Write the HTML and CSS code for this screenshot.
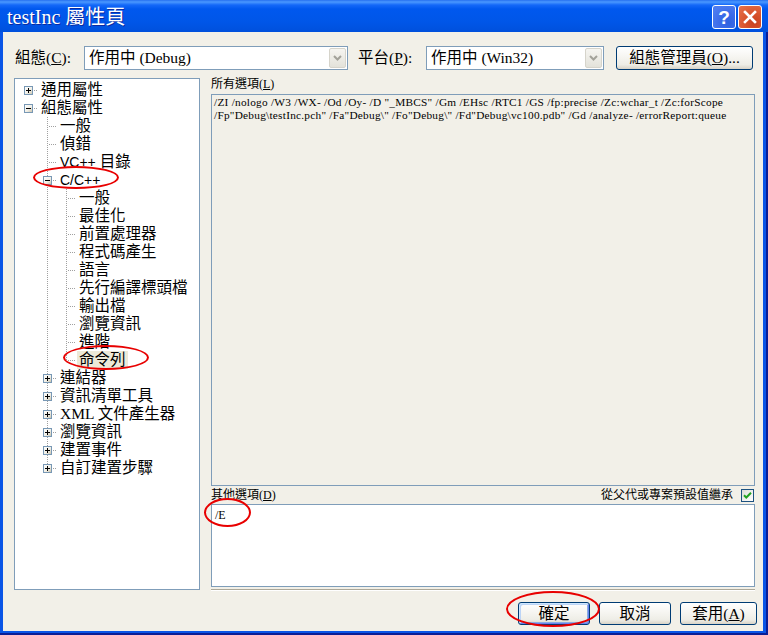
FILE: index.html
```html
<!DOCTYPE html>
<html lang="zh-Hant">
<head>
<meta charset="utf-8">
<title>testInc 屬性頁</title>
<link rel="stylesheet" href="styles.css">
</head>
<body>
<svg class="defs" width="0" height="0" aria-hidden="true">
  <defs>
    <linearGradient id="bxg" x1="0" y1="0" x2="1" y2="1">
      <stop offset="0" stop-color="#FFFFFF"/>
      <stop offset="0.55" stop-color="#F2F0E8"/>
      <stop offset="1" stop-color="#C5BEA6"/>
    </linearGradient>
    <symbol id="bp" viewBox="0 0 9 9">
      <rect x="0.5" y="0.5" width="8" height="8" fill="url(#bxg)" stroke="#7898B5"/>
      <path d="M2 4.5h5M4.5 2v5" stroke="#000" stroke-width="1"/>
    </symbol>
    <symbol id="bm" viewBox="0 0 9 9">
      <rect x="0.5" y="0.5" width="8" height="8" fill="url(#bxg)" stroke="#7898B5"/>
      <path d="M2 4.5h5" stroke="#000" stroke-width="1"/>
    </symbol>
    <symbol id="chev" viewBox="0 0 9 6">
      <path d="M1 1l3.5 3.5L8 1" fill="none" stroke="#A3A29A" stroke-width="2"/>
    </symbol>
  </defs>
</svg>
<div class="window">
  <div class="titlebar">
    <span class="title">testInc 屬性頁</span>
    <div class="tbtns">
      <span class="tb help">?</span>
      <span class="tb close"><svg width="14" height="14" viewBox="0 0 14 14"><path d="M2 2L12 12M12 2L2 12" stroke="#fff" stroke-width="2.6" stroke-linecap="square"/></svg></span>
    </div>
  </div>
  <div class="client">
    <div class="toprow">
      <span class="lbl l1">組態(<u>C</u>):</span>
      <div class="combo c1"><span class="ctext">作用中 (Debug)</span><span class="dd"><svg width="9" height="6"><use href="#chev"/></svg></span></div>
      <span class="lbl l2">平台(<u>P</u>):</span>
      <div class="combo c2"><span class="ctext">作用中 (Win32)</span><span class="dd"><svg width="9" height="6"><use href="#chev"/></svg></span></div>
      <button class="btn cfg">組態管理員(<u>O</u>)...</button>
    </div>
    <div class="main">
      <div class="tree">
        <div class="tr"><i class="c h"><svg class="bx"><use href="#bp"/></svg></i><span class="lb">通用屬性</span></div>
        <div class="tr"><i class="c h"><svg class="bx"><use href="#bm"/></svg></i><span class="lb">組態屬性</span></div>
        <div class="tr"><i class="c"></i><i class="c t"></i><span class="lb">一般</span></div>
        <div class="tr"><i class="c"></i><i class="c t"></i><span class="lb">偵錯</span></div>
        <div class="tr"><i class="c"></i><i class="c t"></i><span class="lb"><span class="sa">VC++</span> 目錄</span></div>
        <div class="tr"><i class="c"></i><i class="c t"><svg class="bx"><use href="#bm"/></svg></i><span class="lb"><span class="sa">C/C++</span></span></div>
        <div class="tr"><i class="c"></i><i class="c v"></i><i class="c t"></i><span class="lb">一般</span></div>
        <div class="tr"><i class="c"></i><i class="c v"></i><i class="c t"></i><span class="lb">最佳化</span></div>
        <div class="tr"><i class="c"></i><i class="c v"></i><i class="c t"></i><span class="lb">前置處理器</span></div>
        <div class="tr"><i class="c"></i><i class="c v"></i><i class="c t"></i><span class="lb">程式碼產生</span></div>
        <div class="tr"><i class="c"></i><i class="c v"></i><i class="c t"></i><span class="lb">語言</span></div>
        <div class="tr"><i class="c"></i><i class="c v"></i><i class="c t"></i><span class="lb">先行編譯標頭檔</span></div>
        <div class="tr"><i class="c"></i><i class="c v"></i><i class="c t"></i><span class="lb">輸出檔</span></div>
        <div class="tr"><i class="c"></i><i class="c v"></i><i class="c t"></i><span class="lb">瀏覽資訊</span></div>
        <div class="tr"><i class="c"></i><i class="c v"></i><i class="c t"></i><span class="lb">進階</span></div>
        <div class="tr"><i class="c"></i><i class="c v"></i><i class="c l"></i><span class="lb sel">命令列</span></div>
        <div class="tr"><i class="c"></i><i class="c t"><svg class="bx"><use href="#bp"/></svg></i><span class="lb">連結器</span></div>
        <div class="tr"><i class="c"></i><i class="c t"><svg class="bx"><use href="#bp"/></svg></i><span class="lb">資訊清單工具</span></div>
        <div class="tr"><i class="c"></i><i class="c t"><svg class="bx"><use href="#bp"/></svg></i><span class="lb">XML 文件產生器</span></div>
        <div class="tr"><i class="c"></i><i class="c t"><svg class="bx"><use href="#bp"/></svg></i><span class="lb">瀏覽資訊</span></div>
        <div class="tr"><i class="c"></i><i class="c t"><svg class="bx"><use href="#bp"/></svg></i><span class="lb">建置事件</span></div>
        <div class="tr"><i class="c"></i><i class="c l"><svg class="bx"><use href="#bp"/></svg></i><span class="lb">自訂建置步驟</span></div>
      </div>
      <div class="right">
        <div class="slbl top">所有選項(<u>L</u>)</div>
        <div class="tb1">
          <div class="cl">/ZI /nologo /W3 /WX- /Od /Oy- /D "_MBCS" /Gm /EHsc /RTC1 /GS /fp:precise /Zc:wchar_t /Zc:forScope</div>
          <div class="cl">/Fp"Debug\testInc.pch" /Fa"Debug\" /Fo"Debug\" /Fd"Debug\vc100.pdb" /Gd /analyze- /errorReport:queue</div>
        </div>
        <div class="optrow">
          <span class="slbl">其他選項(<u>D</u>)</span>
          <span class="inh">從父代或專案預設值繼承</span>
          <span class="chk"><svg width="11" height="11" viewBox="0 0 11 11"><path d="M2 5.2l2.3 2.3L9 2.8" fill="none" stroke="#21A121" stroke-width="2"/></svg></span>
        </div>
        <div class="tb2">/E</div>
        <div class="sep"></div>
      </div>
    </div>
    <div class="btnrow">
      <button class="btn def">確定</button>
      <button class="btn">取消</button>
      <button class="btn wide">套用(<u>A</u>)</button>
    </div>
  </div>
  <div class="ann a1"></div>
  <div class="ann a2"></div>
  <div class="ann a3"></div>
  <div class="ann a4"></div>
</div>
</body>
</html>
```

FILE: styles.css
```css
* { box-sizing: border-box; }
html, body { margin: 0; padding: 0; }
body {
  width: 768px;
  height: 635px;
  overflow: hidden;
  background: #0055EA;
  font-family: "Liberation Serif", "Noto Sans CJK TC", serif;
  color: #000;
}
.defs { display: block; width: 0; height: 0; overflow: hidden; }

.window {
  width: 768px;
  height: 635px;
  display: flex;
  flex-direction: column;
  position: relative;
  background: #0A55E6;
  box-shadow: inset -2px -2px 0 #0A1E96;
}

/* title bar */
.titlebar {
  height: 32px;
  flex: none;
  display: flex;
  align-items: center;
  justify-content: space-between;
  padding: 0 6px 0 7px;
  background: linear-gradient(to bottom, #2670F0 0, #4A98FF 2px, #1468F8 5px, #0058EE 9px, #0056E8 22px, #0050DC 32px);
}
.title {
  color: #fff;
  font-size: 20px;
  line-height: 22px;
  text-shadow: 1px 1px 0 #0C2A9E;
  margin-top: 2px;
}
.tbtns { display: flex; gap: 2px; margin-top: 2px; }
.tb {
  width: 24px;
  height: 24px;
  border: 1px solid #fff;
  border-radius: 3px;
  display: flex;
  align-items: center;
  justify-content: center;
}
.help {
  background: radial-gradient(circle at 70% 75%, #2F63E0 0, #3A6AE8 35%, #4C7BF0 80%);
  color: #fff;
  font: bold 19px/1 "Liberation Sans", sans-serif;
}
.close {
  background: radial-gradient(circle at 70% 75%, #C8401E 0, #D8532C 40%, #E56E48 90%);
}

/* client */
.client {
  flex: 1;
  margin: 0 5px 4px 3px;
  background: #F2F0E8;
  display: flex;
  flex-direction: column;
  padding: 0 6px 0 11px;
}

.toprow {
  margin-top: 14px;
  height: 24px;
  display: flex;
  align-items: center;
  padding-left: 1px;
  flex: none;
}
.lbl { font-size: 15.5px; line-height: 18px; flex: none; }
.l1 { width: 69px; }
.l2 { width: 68px; margin-left: 10px; }
.combo {
  flex: none;
  height: 24px;
  border: 1px solid #7F9DB9;
  background: #fff;
  display: flex;
  align-items: center;
  padding: 0 1px 0 4px;
}
.c1 { width: 264px; }
.c2 { width: 178px; }
.ctext { flex: 1; font-size: 15.5px; line-height: 18px; white-space: nowrap; }
.dd {
  width: 17px;
  height: 20px;
  border: 1px solid #D6D4CB;
  border-radius: 2px;
  background: linear-gradient(to bottom, #F6F5F1, #E3E2DA);
  display: flex;
  align-items: center;
  justify-content: center;
}

.btn {
  font-family: "Liberation Serif", "Noto Sans CJK TC", serif;
  font-size: 15.5px;
  line-height: 18px;
  color: #000;
  border: 1px solid #003C74;
  border-radius: 3px;
  background: linear-gradient(to bottom, #FFFFFF 0%, #F6F5F1 45%, #EEEDE6 80%, #D8D3C7 100%);
  display: flex;
  align-items: center;
  justify-content: center;
  padding: 0;
  flex: none;
}
.cfg { width: 137px; height: 24px; margin-left: 12px; }

/* main */
.main {
  margin-top: 8px;
  height: 513px;
  display: flex;
  flex: none;
}
.tree {
  width: 186px;
  height: 512px;
  border: 1px solid #7F9DB9;
  background: #fff;
  padding: 2px 0 0 4px;
  flex: none;
}
.tr {
  height: 18px;
  display: flex;
  align-items: center;
}
.c { display: block; flex: none; width: 19px; height: 18px; }
.v {
  background: repeating-linear-gradient(to bottom, #A0A0A0 0 1px, transparent 1px 2px) 9px 0 / 1px 18px no-repeat;
}
.t {
  background:
    repeating-linear-gradient(to right, #A0A0A0 0 1px, transparent 1px 2px) 11px 9px / 8px 1px no-repeat,
    repeating-linear-gradient(to bottom, #A0A0A0 0 1px, transparent 1px 2px) 9px 0 / 1px 18px no-repeat;
}
.l {
  background:
    repeating-linear-gradient(to right, #A0A0A0 0 1px, transparent 1px 2px) 11px 9px / 8px 1px no-repeat,
    repeating-linear-gradient(to bottom, #A0A0A0 0 1px, transparent 1px 2px) 9px 0 / 1px 10px no-repeat;
}
.h {
  background: repeating-linear-gradient(to right, #A0A0A0 0 1px, transparent 1px 2px) 11px 9px / 8px 1px no-repeat;
}
.bx { display: block; width: 9px; height: 9px; margin: 5px 0 0 5px; }
.lb {
  font-size: 15.5px;
  line-height: 16px;
  padding: 1px 2px;
  margin-left: 1px;
  white-space: nowrap;
}
.sa { font-family: "Liberation Sans", sans-serif; font-size: 14px; }
.sel { background: #ECE9D8; }

.right {
  width: 544px;
  margin-left: 11px;
  display: flex;
  flex-direction: column;
  flex: none;
}
.slbl { font-size: 12px; line-height: 12px; white-space: nowrap; }
.slbl.top { height: 16px; }
.tb1 {
  height: 392px;
  border: 1px solid #7F9DB9;
  background: #F2F0E8;
  padding: 1px 2px;
  font-family: "Liberation Serif", serif;
  font-size: 11.3px;
  letter-spacing: 0.25px;
  white-space: nowrap;
  overflow: hidden;
  flex: none;
}
.cl { height: 13px; line-height: 13px; }
.optrow {
  height: 18px;
  display: flex;
  align-items: center;
  flex: none;
}
.inh {
  margin-left: auto;
  font-size: 12px;
  line-height: 12px;
  margin-right: 8px;
}
.chk {
  width: 13px;
  height: 13px;
  border: 1px solid #1C5180;
  background: linear-gradient(135deg, #DCDCD7, #FFFFFF);
  margin-right: 1px;
  display: flex;
  align-items: center;
  justify-content: center;
}
.chk svg { display: block; }
.tb2 {
  height: 83px;
  border: 1px solid #7F9DB9;
  background: #fff;
  padding: 4px 3px;
  font-family: "Liberation Serif", serif;
  font-size: 12px;
  line-height: 12px;
  flex: none;
}
.sep {
  margin-top: 2px;
  height: 2px;
  border-top: 1px solid #ACA899;
  border-bottom: 1px solid #FFFFFF;
  flex: none;
}

.btnrow {
  margin-top: 11px;
  height: 23px;
  display: flex;
  justify-content: flex-end;
  gap: 9px;
  flex: none;
}
.btnrow .btn { width: 72px; height: 23px; }
.btnrow .wide { width: 77px; }
.def {
  box-shadow: inset 1px 1px 0 #CEE7FF, inset -1px -1px 0 #6982EE, inset 2px 2px 0 #BCD4F6, inset -2px -2px 0 #89ADE4;
}

/* red annotation ellipses */
.ann {
  position: absolute;
  border: 2px solid #E80000;
  border-radius: 50%;
}
.a1 { left: 33px; top: 166px; width: 86px; height: 23px; }
.a2 { left: 63px; top: 345px; width: 86px; height: 25px; }
.a3 { left: 204px; top: 498px; width: 47px; height: 29px; }
.a4 { left: 506px; top: 591px; width: 94px; height: 36px; }
```
